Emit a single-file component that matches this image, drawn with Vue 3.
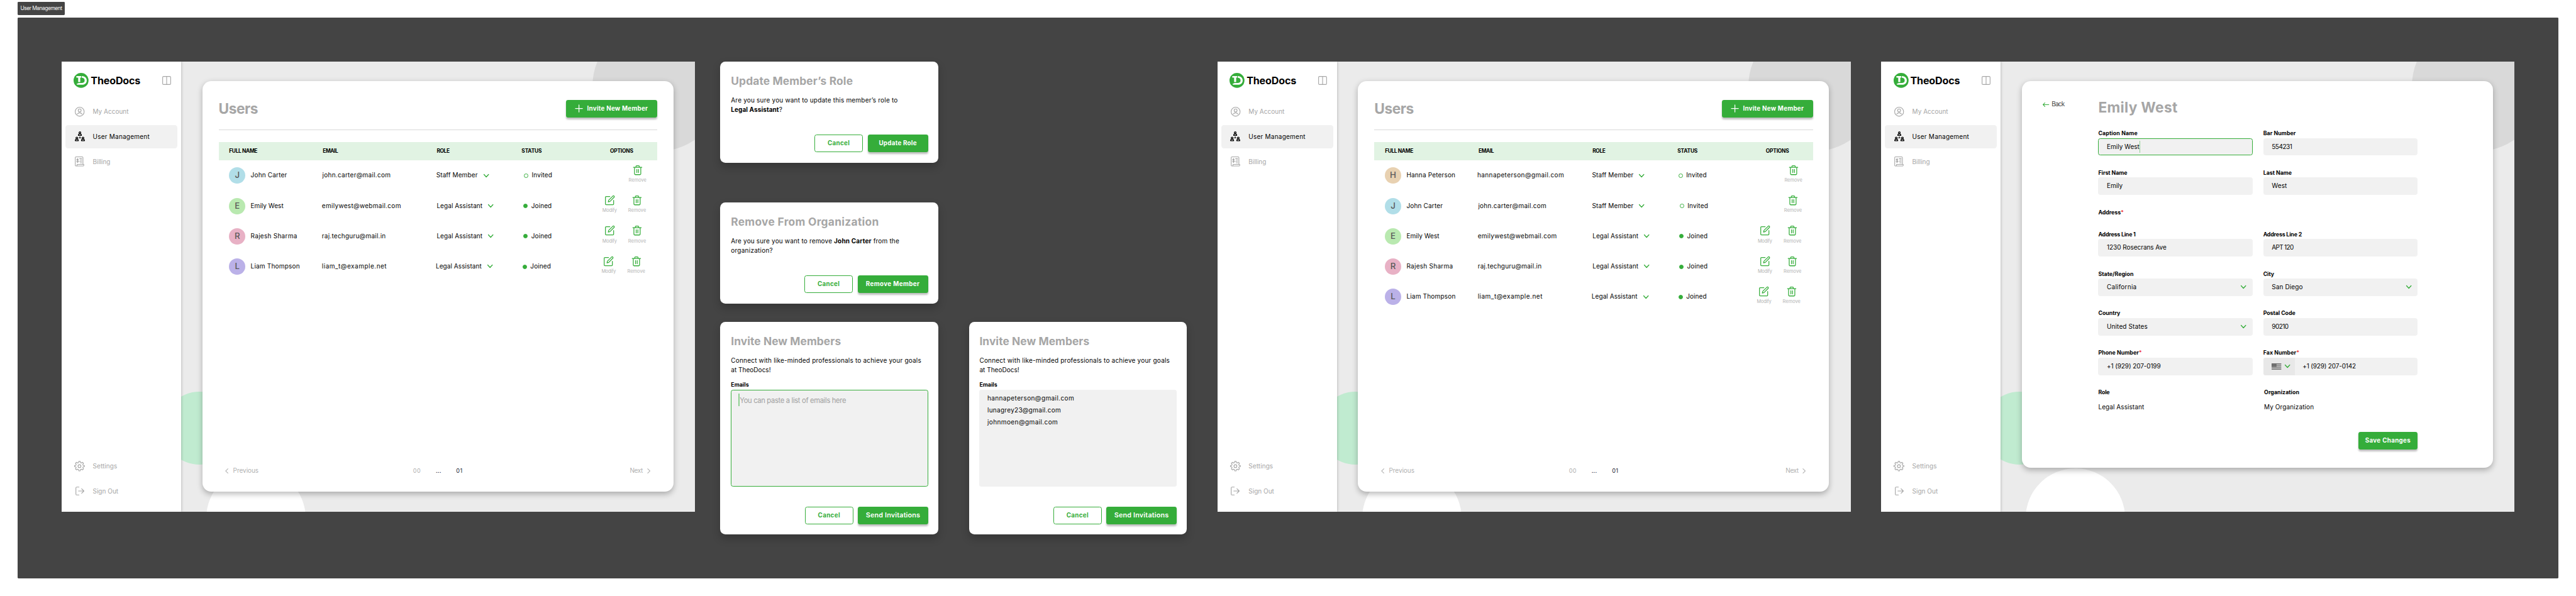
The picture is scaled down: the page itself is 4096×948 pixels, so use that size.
<script setup>
// Every measured text gets its tracking set so that it fills a given width.
const BOARD_WIDTH = 5857

const vFit = {
  mounted(el, binding) {
    const scale = el.closest('.page').getBoundingClientRect().width / BOARD_WIDTH
    const count = el.textContent.trim().length - 1
    if (count < 1) return
    let spacing = 0
    for (let pass = 0; pass < 3; pass++) {
      const width = el.getBoundingClientRect().width / scale - spacing
      spacing += (binding.value - width) / count
      el.style.letterSpacing = spacing.toFixed(3) + 'px'
    }
  },
}

const icons = {
  account:
    '<circle cx="11" cy="11" r="10.2"/><circle cx="11" cy="8" r="3.4"/><path d="M5.6 16.4c1.4-2 3.2-3 5.4-3s4 1 5.4 3"/>',
  team:
    '<circle cx="11.5" cy="3" r="2"/><path d="M8 9.2c0-2.6 1.2-3.6 3.5-3.6S15 6.600 15 9.200z"/><circle cx="4.500" cy="15" r="2"/><path d="M1 21.200c0-2.600 1.200-3.600 3.500-3.600S8 18.600 8 21.200z"/><circle cx="18.500" cy="15" r="2"/><path d="M15 21.200c0-2.600 1.200-3.600 3.500-3.600s3.500 1 3.500 3.600z"/><path d="M11.500 12v2M9.500 14.700h4" stroke-width="1.500"/>',
  billing:
    '<path d="M18.500 17V2.500a1.700 1.700 0 0 0-1.700-1.700H2.700A1.700 1.700 0 0 0 1 2.500v17.200a1.700 1.700 0 0 0 1.700 1.700h16a1.700 1.700 0 0 0 1.700-1.700v-1.900H5.200v1.900c0 1-.6 1.700-1.500 1.700"/><path d="M8.200 6.800c-.4-.8-1-1.100-1.900-1.100-1.100 0-1.900.6-1.900 1.600 0 2.200 3.900 1.100 3.900 3.400 0 1.100-.9 1.700-2 1.700-1 0-1.800-.4-2.200-1.300M6.300 4.200v9.600M11 4.800h4.800M12.500 8h3.300M11 11.200h4.800M12.500 14.300h3.300"/>',
  settings:
    '<circle cx="12" cy="12" r="3.300"/><path d="M10.300 1.200h3.400l.6 3 1.900.8 2.600-1.700 2.400 2.400-1.700 2.600.8 1.900 3 .6v2.400l-3 .6-.8 1.900 1.700 2.600-2.400 2.400-2.600-1.700-1.900.8-.6 3h-3.400l-.6-3-1.900-.8-2.600 1.700-2.400-2.400 1.700-2.600-.8-1.900-3-.6v-2.400l3-.6.8-1.900-1.700-2.600 2.400-2.400 2.600 1.700 1.900-.8z"/>',
  signout:
    '<path d="M8 1H3a2 2 0 0 0-2 2v14a2 2 0 0 0 2 2h5M6.800 10h12.400M14 4.800l5.200 5.200-5.200 5.200"/>',
  panel: '<rect x=".9" y=".9" width="18.200" height="18.200" rx="2"/><path d="M10 1v18"/>',
  plus: '<path d="M8 0v16M0 8h16"/>',
  down: '<path d="M.8.8l5.200 5.600L11.200.8"/>',
  left: '<path d="M6.400.8L1.200 5.800l5.200 5"/>',
  right: '<path d="M1.200.8l5.200 5-5.200 5"/>',
  back: '<path d="M14 5H1M5 .8L.8 5 5 9.200"/>',
  trash:
    '<path d="M.4 4.600h19M6.200 4.400V2.300c0-.8.5-1.400 1.300-1.400h4.800c.8 0 1.300.6 1.300 1.400v2.100M2.800 4.800v14.600c0 1 .7 1.700 1.700 1.700h10.800c1 0 1.700-.7 1.700-1.700V4.800M8 9.200v7.400M11.800 9.200v7.400"/>',
  edit:
    '<path d="M11 2.400H2.700C1.700 2.400 1 3.100 1 4.100v15.200c0 1 .7 1.700 1.700 1.700h15.200c1 0 1.700-.7 1.700-1.700v-8.300"/><path d="M7.400 14.600l1-4L17.900 1.200c.8-.7 1.900-.7 2.700 0 .8.8.8 2 0 2.800l-9.300 9.400z"/>',
  flag:
    '<path d="M0 .8h22M0 4h22M0 7.200h22M0 10.300h22M0 13.400h22" stroke-width="1.700"/><path d="M0 0h11v8H0z" fill="#666" stroke="none"/><path d="M2 2.200h7.500M2 4.200h7.500M2 6.200h7.500" stroke="#aaa" stroke-width=".8" stroke-dasharray="1 1.300"/>',
}

const nav = [
  { icon: 'account', box: '0 0 22 22', w: 22, h: 22, text: 'My Account', fit: 81.5 },
  { icon: 'team', box: '0 0 23 23', w: 23, h: 23, text: 'User Management', fit: 129, active: true },
  { icon: 'billing', box: '0 0 22 22', w: 22, h: 22, text: 'Billing', fit: 40 },
]
const navBottom = [
  { icon: 'settings', box: '0 0 24 24', w: 24, h: 24, text: 'Settings', fit: 55.5 },
  { icon: 'signout', box: '0 0 20 20', w: 20, h: 20, text: 'Sign Out', fit: 58 },
]

const hanna = { name: 'Hanna Peterson', nameFit: 111, email: 'hannapeterson@gmail.com', emailFit: 197, tone: 'sand' }
const john = { name: 'John Carter', nameFit: 82.5, email: 'john.carter@mail.com', emailFit: 155, tone: 'sky' }
const emily = { name: 'Emily West', nameFit: 74.5, email: 'emilywest@webmail.com', emailFit: 179.5, tone: 'mint' }
const rajesh = { name: 'Rajesh Sharma', nameFit: 105.5, email: 'raj.techguru@mail.in', emailFit: 145, tone: 'rose' }
const liam = { name: 'Liam Thompson', nameFit: 111.5, email: 'liam_t@example.net', emailFit: 147, tone: 'violet' }

// cols: widths of the name, email and role columns, then the space after the options
const staff = { role: 'Staff Member', roleFit: 94, status: 'Invited', statusFit: 46.5 }
const legal = { role: 'Legal Assistant', roleFit: 104, status: 'Joined', statusFit: 46.5, joined: true }

const columns = [
  {
    kind: 'users',
    rows: [
      { ...john, ...staff, cols: [236, 259, 199, 25] },
      { ...emily, ...legal, cols: [235, 261, 197, 26] },
      { ...rajesh, ...legal, cols: [235, 261, 197, 26] },
      { ...liam, ...legal, cols: [235, 259, 197, 28] },
    ],
  },
  {
    kind: 'modals',
    modals: [
      { type: 'role', title: 'Update Member’s Role', titleFit: 277, action: 'Update Role', actionFit: 86, wide: 137 },
      { type: 'remove', title: 'Remove From Organization', titleFit: 336, action: 'Remove Member', actionFit: 122, wide: 160 },
      { type: 'invite', title: 'Invite New Members', titleFit: 250, action: 'Send Invitations', actionFit: 123.5, wide: 159 },
    ],
  },
  {
    kind: 'modals',
    low: true,
    modals: [
      {
        type: 'invite',
        title: 'Invite New Members',
        titleFit: 250,
        action: 'Send Invitations',
        actionFit: 123.5,
        wide: 159,
        emails: [
          { text: 'hannapeterson@gmail.com', fit: 197 },
          { text: 'lunagrey23@gmail.com', fit: 167 },
          { text: 'johnmoen@gmail.com', fit: 160 },
        ],
      },
    ],
  },
  {
    kind: 'users',
    rows: [
      { ...hanna, ...staff, cols: [234, 261, 196, 25] },
      { ...john, ...staff, cols: [236, 259, 199, 26] },
      { ...emily, ...legal, cols: [235, 261, 197, 27] },
      { ...rajesh, ...legal, cols: [235, 261, 197, 27] },
      { ...liam, ...legal, cols: [235, 259, 197, 29] },
    ],
  },
  { kind: 'form' },
]

const fields = [
  { label: 'Caption Name', fit: 89, value: 'Emily West', vfit: 74, focus: true },
  { label: 'Bar Number', fit: 74, value: '554231', vfit: 46.5 },
  { label: 'First Name', fit: 66, value: 'Emily', vfit: 36 },
  { label: 'Last Name', fit: 65, value: 'West', vfit: 34.5 },
  { label: 'Address', fit: 51, required: true, heading: true },
  { label: 'Address Line 1', fit: 85, value: '1230 Rosecrans Ave', vfit: 135.5 },
  { label: 'Address Line 2', fit: 88, value: 'APT 120', vfit: 50 },
  { label: 'State/Region', fit: 80, value: 'California', vfit: 67.5, select: true },
  { label: 'City', fit: 25, value: 'San Diego', vfit: 70.500, select: true },
  { label: 'Country', fit: 50, value: 'United States', vfit: 92.500, select: true },
  { label: 'Postal Code', fit: 73, value: '90210', vfit: 38.500 },
  { label: 'Phone Number', fit: 92, required: true, value: '+1 (929) 207-0199', vfit: 122.500 },
  { label: 'Fax Number', fit: 75, required: true, value: '+1 (929) 207-0142', vfit: 121.500, flag: true },
  { label: 'Role', fit: 26, value: 'Legal Assistant', vfit: 104, plain: true },
  { label: 'Organization', fit: 80, value: 'My Organization', vfit: 113, plain: true, indent: true },
]
</script>

<template>
  <div class="page">
    <div class="tag"><span v-fit="95">User Management</span></div>
    <main class="board">
      <template v-for="(col, c) in columns" :key="c">
        <section v-if="col.kind === 'modals'" class="modals" :class="{ low: col.low }">
          <article v-for="m in col.modals" :key="m.title" class="modal" :class="m.type">
            <h2 class="modal-title"><span v-fit="m.titleFit">{{ m.title }}</span></h2>
            <div class="copy">
              <template v-if="m.type === 'role'">
                <div><span v-fit="379">Are you sure you want to update this member’s role to</span></div>
                <div><span v-fit="116.5"><b>Legal Assistant</b>?</span></div>
              </template>
              <template v-else-if="m.type === 'remove'">
                <div><span v-fit="382.5">Are you sure you want to remove <b>John Carter</b> from the</span></div>
                <div><span v-fit="95">organization?</span></div>
              </template>
              <template v-else>
                <div><span v-fit="432.5">Connect with like-minded professionals to achieve your goals</span></div>
                <div><span v-fit="90.5">at TheoDocs!</span></div>
              </template>
            </div>
            <template v-if="m.type === 'invite'">
              <div class="label"><span v-fit="40.5">Emails</span></div>
              <div v-if="m.emails" class="area list">
                <div v-for="e in m.emails" :key="e.text"><span v-fit="e.fit">{{ e.text }}</span></div>
              </div>
              <div v-else class="area focus">
                <i class="caret"></i><span v-fit="242" class="hint">You can paste a list of emails here</span>
              </div>
            </template>
            <div class="actions">
              <button class="btn ghost"><span v-fit="50">Cancel</span></button>
              <button class="btn" :style="{ width: m.wide + 'px' }"><span v-fit="m.actionFit">{{ m.action }}</span></button>
            </div>
          </article>
        </section>

        <section v-else class="frame">
          <i class="blob green"></i>
          <i class="blob white"></i>
          <i class="blob grey"></i>
          <aside class="side">
            <div class="brand">
              <svg class="logo" width="34" height="34" viewBox="0 0 34 34">
                <circle cx="17" cy="17" r="17" fill="#35ad3a" />
                <path d="M6.300 7.200h11v3.600h-2.200v10h-4.600v-10H6.300z" fill="#fff" />
                <path d="M18.600 7c7 .2 11.400 4.200 11.400 10s-4.400 10-11.600 10H7.600v-3.200h3V22.800h7.600c4.600 0 7-2.200 7-5.800 0-3.400-2.400-6-6.600-6.200z" fill="#fff" />
              </svg>
              <span class="brand-name"><span v-fit="113">TheoDocs</span></span>
              <svg class="ico" width="20" height="20" viewBox="0 0 20 20" v-html="icons.panel"></svg>
            </div>
            <nav>
              <a v-for="n in nav" :key="n.text" class="item" :class="{ active: n.active }">
                <span class="slot"><svg class="ico" :class="n.icon" :width="n.w" :height="n.h" :viewBox="n.box" v-html="icons[n.icon]"></svg></span>
                <span v-fit="n.fit">{{ n.text }}</span>
              </a>
            </nav>
            <nav class="bottom">
              <a v-for="n in navBottom" :key="n.text" class="item">
                <span class="slot"><svg class="ico" :width="n.w" :height="n.h" :viewBox="n.box" v-html="icons[n.icon]"></svg></span>
                <span v-fit="n.fit">{{ n.text }}</span>
              </a>
            </nav>
          </aside>

          <div v-if="col.kind === 'users'" class="card users">
            <header class="card-head">
              <h1><span v-fit="90">Users</span></h1>
              <button class="btn invite-btn">
                <svg width="16" height="16" viewBox="0 0 16 16" v-html="icons.plus"></svg>
                <span v-fit="138">Invite New Member</span>
              </button>
            </header>
            <div class="thead">
              <span><span v-fit="64.5">FULL NAME</span></span>
              <span><span v-fit="35">EMAIL</span></span>
              <span><span v-fit="29.500">ROLE</span></span>
              <span><span v-fit="46">STATUS</span></span>
              <span><span v-fit="53">OPTIONS</span></span>
            </div>
            <div
              v-for="r in col.rows"
              :key="r.name"
              class="row"
              :style="{ gridTemplateColumns: `${r.cols[0]}px ${r.cols[1]}px ${r.cols[2]}px 1fr`, paddingRight: r.cols[3] + 'px' }"
            >
              <div class="who">
                <span class="avatar" :class="r.tone">{{ r.name[0] }}</span>
                <span v-fit="r.nameFit">{{ r.name }}</span>
              </div>
              <div><span v-fit="r.emailFit">{{ r.email }}</span></div>
              <div class="role-cell">
                <span v-fit="r.roleFit">{{ r.role }}</span>
                <svg class="chev" width="12" height="8" viewBox="0 0 12 8" v-html="icons.down"></svg>
              </div>
              <div class="state">
                <i class="dot" :class="{ full: r.joined }"></i>
                <span v-fit="r.statusFit">{{ r.status }}</span>
                <div class="options">
                  <div v-if="r.joined" class="opt">
                    <svg class="act" width="22" height="22" viewBox="0 0 22 22" v-html="icons.edit"></svg>
                    <span v-fit="33">Modify</span>
                  </div>
                  <div class="opt">
                    <svg class="act" width="20" height="22" viewBox="0 0 20 22" v-html="icons.trash"></svg>
                    <span v-fit="40.500">Remove</span>
                  </div>
                </div>
              </div>
            </div>
            <footer class="pager">
              <span class="prev"><svg width="8" height="12" viewBox="0 0 8 12" v-html="icons.left"></svg><span v-fit="58">Previous</span></span>
              <span class="pages"><span v-fit="17">00</span><span v-fit="12" class="ink">...</span><span v-fit="14" class="ink">01</span></span>
              <span class="next"><span v-fit="29.500">Next</span><svg width="8" height="12" viewBox="0 0 8 12" v-html="icons.right"></svg></span>
            </footer>
          </div>

          <div v-else class="card detail">
            <a class="back"><svg width="14" height="10" viewBox="0 0 14 10" v-html="icons.back"></svg><span v-fit="30">Back</span></a>
            <div class="form">
              <h1><span v-fit="180">Emily West</span></h1>
              <div class="fields">
                <div v-for="f in fields" :key="f.label" class="field" :class="{ heading: f.heading, indent: f.indent }">
                  <div class="label"><span v-fit="f.fit">{{ f.label }}</span><em v-if="f.required">*</em></div>
                  <div v-if="f.plain" class="plain"><span v-fit="f.vfit">{{ f.value }}</span></div>
                  <div v-else-if="!f.heading" class="input" :class="{ focus: f.focus }">
                    <span v-if="f.flag" class="prefix">
                      <svg class="flag" width="22" height="14" viewBox="0 0 22 14" v-html="icons.flag"></svg>
                      <svg class="chev" width="12" height="8" viewBox="0 0 12 8" v-html="icons.down"></svg>
                    </span>
                    <span v-fit="f.vfit">{{ f.value }}</span>
                    <i v-if="f.focus" class="caret"></i>
                    <svg v-if="f.select" class="chev end" width="12" height="8" viewBox="0 0 12 8" v-html="icons.down"></svg>
                  </div>
                </div>
              </div>
              <button class="btn save"><span v-fit="103">Save Changes</span></button>
            </div>
          </div>
        </section>
      </template>
    </main>
  </div>
</template>

<style>
html,
body {
  margin: 0;
  background: #fff;
  overflow: hidden;
}
</style>

<style scoped>
.page {
  zoom: 0.69933;
  width: 5857px;
  height: 1356px;
  box-sizing: border-box;
  padding: 4px 40px 40px;
  font: 400 14.3px/20px Inter, 'Liberation Sans', sans-serif;
  color: #000;
}
.page * {
  box-sizing: border-box;
}
span {
  white-space: nowrap;
}
svg {
  display: block;
  flex: none;
  fill: none;
  stroke: currentColor;
  stroke-width: 1.8;
  stroke-linecap: round;
  stroke-linejoin: round;
  overflow: visible;
}
h1,
h2 {
  margin: 0;
  color: #a6a6a6;
  font-weight: 700;
}
h1 {
  font-size: 32.5px;
  line-height: 48px;
}
b {
  font-weight: 700;
}
.tag {
  width: 108px;
  height: 30px;
  margin-bottom: 6px;
  padding-left: 6.5px;
  border-radius: 2px;
  background: #444;
  color: #f4f4f4;
  font-size: 12px;
  line-height: 29px;
}
.board {
  display: flex;
  align-items: flex-start;
  gap: 69px;
  height: 1276px;
  padding: 100px;
  border-radius: 2px;
  background: #444;
}

/* dialogs */
.modals {
  width: 496px;
  flex: none;
  margin-left: -11px;
}
.modals.low {
  margin-left: 0;
  padding-top: 592px;
}
.modal {
  display: flex;
  flex-direction: column;
  height: 230px;
  padding: 26.5px 24px 24px;
  border-radius: 12px;
  background: #fff;
  box-shadow: 0 10px 20px rgba(0, 0, 0, 0.2);
}
.modal.remove {
  margin: 90px 0 42px;
}
.modal.invite {
  height: 484px;
}
.modal-title {
  font-size: 24.8px;
  line-height: 36px;
}
.copy {
  margin-top: 15px;
  line-height: 22px;
}
.label {
  height: 20px;
  font-size: 12.6px;
  font-weight: 700;
  line-height: 20px;
}
.label em {
  color: #f03a3a;
  font-style: normal;
}
.modal .label {
  margin-top: 11.5px;
}
.area {
  height: 221px;
  margin-top: 1px;
  border-radius: 5px;
  background: #f1f1f1;
}
.area.focus {
  display: flex;
  padding: 8px 16px;
  border: 1px solid #35ad3a;
}
.hint {
  margin-left: 1px;
  color: #a0a0a0;
  font-size: 16px;
  line-height: 32px;
}
.list {
  padding: 6.2px 18px;
  line-height: 27.6px;
}
.caret {
  width: 1.6px;
  height: 28px;
  background: #8fd092;
}
.actions {
  display: flex;
  justify-content: flex-end;
  gap: 11px;
  margin-top: auto;
}
.btn {
  display: flex;
  align-items: center;
  justify-content: center;
  height: 40px;
  padding: 0;
  border: 0;
  border-radius: 5px;
  background: #35ad3a;
  box-shadow: 0 4px 4px rgba(0, 0, 0, 0.25);
  color: #fff;
  font: 700 14px/20px Inter, 'Liberation Sans', sans-serif;
}
.invite .btn:not(.ghost) {
  font-size: 15.5px;
  font-weight: 600;
}
.ghost {
  width: 110px;
  border: 1px solid #35ad3a;
  background: #fff;
  box-shadow: none;
  color: #35ad3a;
}

/* application frame */
.frame {
  position: relative;
  display: flex;
  align-items: flex-start;
  flex: none;
  width: 1440px;
  height: 1024px;
  overflow: hidden;
  background: #ebebeb;
}
.blob {
  position: absolute;
  border-radius: 50%;
}
.blob.green {
  left: 231px;
  top: 751px;
  width: 166px;
  height: 166px;
  background: #c0ebd0;
}
.blob.white {
  left: 329px;
  top: 925px;
  width: 226px;
  height: 226px;
  background: #fff;
}
.blob.grey {
  left: 1207.5px;
  top: -91.5px;
  width: 296px;
  height: 296px;
  background: #d9d9d9;
}
.side {
  position: relative;
  display: flex;
  flex-direction: column;
  width: 272px;
  height: 1024px;
  padding: 26px 9px 21px;
  background: #fff;
  box-shadow: 2px 0 6px rgba(0, 0, 0, 0.25);
}
.brand {
  display: flex;
  align-items: center;
  height: 34px;
  margin-bottom: 27px;
  padding: 0 14px 0 19px;
  color: #a6a6a6;
}
.logo {
  stroke: none;
}
.brand-name {
  margin: 0 auto 0 4.500px;
  color: #000;
  font-size: 23px;
  font-weight: 700;
}
.item {
  display: flex;
  align-items: center;
  height: 53px;
  margin-bottom: 4px;
  border-radius: 6px;
  color: #a6a6a6;
}
.item > span:last-child {
  padding-top: 3.5px;
}
.active {
  background: #f1f1f1;
  color: #000;
}
.slot {
  display: flex;
  justify-content: center;
  width: 24px;
  margin: 0 18px 0 20px;
}
.ico {
  stroke-width: 1.6;
}
.ico.team {
  stroke-width: 1.9;
}
.ico.billing {
  stroke-width: 1.5;
}
.bottom {
  margin-top: auto;
}
.bottom .item:last-child {
  margin-bottom: 0;
}
.card {
  position: relative;
  width: 1071px;
  margin: 45px 0 0 48px;
  border-radius: 20px;
  background: #fff;
  box-shadow: 0 5px 14px rgba(0, 0, 0, 0.27);
}

/* users table */
.users {
  display: flex;
  flex-direction: column;
  height: 933px;
  padding: 0 36px 37px 37px;
}
.card-head {
  display: flex;
  align-items: center;
  justify-content: space-between;
  height: 111px;
  margin-bottom: 27px;
  padding-top: 14px;
  border-bottom: 1px solid #d9d9d9;
}
.card-head h1 {
  padding-top: 2px;
}
.invite-btn {
  gap: 10.500px;
  width: 208px;
}
.thead {
  display: grid;
  grid-template-columns: 213px 259px 193px 201px auto;
  height: 42px;
  padding-left: 24px;
  background: #e1f3e3;
  font-size: 12px;
  font-weight: 700;
  line-height: 42px;
}
.row {
  display: grid;
  align-items: center;
  height: 69px;
}
.who {
  display: flex;
  align-items: center;
  gap: 12px;
  padding-left: 24px;
}
.avatar {
  width: 37px;
  height: 37px;
  border-radius: 50%;
  color: #595959;
  font-size: 19px;
  font-weight: 500;
  line-height: 37px;
  text-align: center;
}
.sand {
  background: #e8d1b1;
}
.sky {
  background: #b1dee8;
}
.mint {
  background: #b9e9b0;
}
.rose {
  background: #e8b1c5;
}
.violet {
  background: #bbb1e8;
}
.role-cell,
.state {
  display: flex;
  align-items: center;
}
.role-cell {
  gap: 13px;
}
.chev {
  color: #35ad3a;
  stroke-width: 1.9;
}
.dot {
  width: 10px;
  height: 10px;
  margin-right: 8px;
  border: 1px solid #35ad3a;
  border-radius: 50%;
}
.dot.full {
  background: #35ad3a;
}
.options {
  display: flex;
  gap: 26px;
  height: 69px;
  margin-left: auto;
  padding-top: 11px;
}
.opt {
  display: flex;
  flex-direction: column;
  align-items: center;
  gap: 5.500px;
  color: #b3b3b3;
  font-size: 10.500px;
  line-height: 14px;
}
.act {
  color: #35ad3a;
}
.pager {
  display: grid;
  grid-template-columns: 1fr auto 1fr;
  align-items: center;
  margin-top: auto;
  padding: 0 16px 0 15px;
  color: #b0b0b0;
}
.pager svg {
  stroke-width: 1.5;
}
.prev,
.next,
.pages {
  display: flex;
  align-items: center;
}
.prev {
  gap: 10px;
}
.next {
  gap: 10px;
  justify-content: flex-end;
}
.pages {
  gap: 34px;
  font-size: 13px;
}
.ink {
  color: #1a2233;
}

/* member form */
.detail {
  display: flex;
  align-items: flex-start;
  height: 879px;
  padding: 35.500px 0 0 47px;
}
.back {
  display: flex;
  align-items: center;
  gap: 7px;
  width: 127px;
  height: 20px;
  margin-top: 7px;
  color: #444;
}
.back svg {
  color: #35ad3a;
  stroke-width: 1.500;
}
.form {
  width: 726px;
}
.fields {
  display: grid;
  grid-template-columns: 351px 351px;
  gap: 29px 24px;
  margin-top: 24.500px;
}
.field {
  height: 61px;
}
.heading {
  grid-column: 1 / 3;
  height: 21px;
}
.indent {
  padding-left: 2px;
}
.input {
  display: flex;
  align-items: center;
  height: 40px;
  margin-top: 1px;
  padding: 0 13px 0 18px;
  border: 1px solid #f1f1f1;
  border-radius: 5px;
  background: #f1f1f1;
}
.input.focus {
  border-color: #35ad3a;
}
.end {
  margin-left: auto;
}
.prefix {
  display: flex;
  align-items: center;
  gap: 8px;
  width: 72px;
  height: 40px;
  margin: 0 17px 0 -19px;
  padding-left: 18px;
  border-radius: 5px 0 0 5px;
  background: #e8e8e8;
}
.flag {
  color: #666;
  stroke-linecap: butt;
}
.plain {
  margin-top: 14px;
}
.save {
  width: 135px;
  margin: 39px 0 0 auto;
}
</style>
